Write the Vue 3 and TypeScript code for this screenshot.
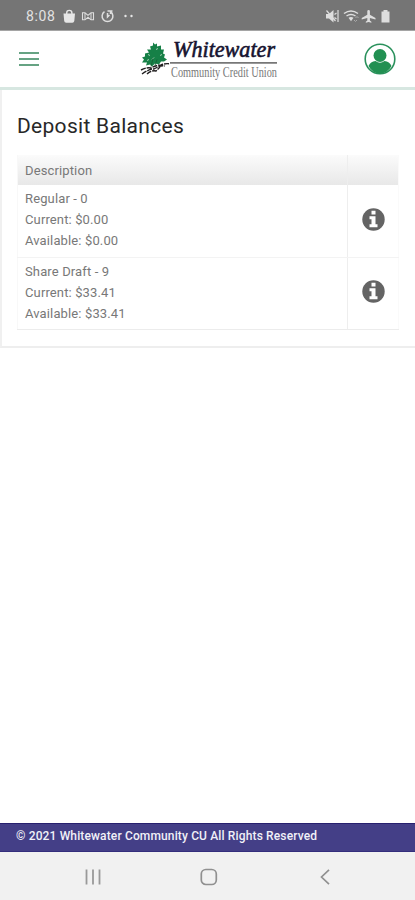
<script setup lang="ts">
interface Account {
  name: string
  current: string
  available: string
}

const accounts: Account[] = [
  { name: 'Regular - 0', current: '$0.00', available: '$0.00' },
  { name: 'Share Draft - 9', current: '$33.41', available: '$33.41' },
]
</script>

<template>
  <div class="screen">
    <div class="status">
      <span class="clock">8:08</span>
      <svg class="left-icons" width="76" height="16" viewBox="0 0 76 16" fill="none" stroke="#dedede">
        <path d="M1.500 5.500h11.500l-.7 7.500a2 2 0 0 1-2 1.700H4.200a2 2 0 0 1-2-1.700z" fill="#e6e6e6" stroke="none" />
        <path d="M4.700 6V5a2.600 2.600 0 0 1 5.200 0v1" stroke="#e6e6e6" stroke-width="1.400" />
        <path d="M20.500 4.800h2.500l3 2.500 3-2.500h2.500v7h-2.500l-3-2.500-3 2.500h-2.500z" stroke-width="1.100" />
        <path d="M23 5v6.500M29 5v6.500" stroke-width="1" />
        <path d="M42.500 3.700a5.400 5.400 0 1 0 6 0M45.500 5v4l2-2M45.500 3h5M48.500 3v3" stroke-width="1.500" />
        <circle cx="63.500" cy="8" r="1.200" fill="#e6e6e6" stroke="none" />
        <circle cx="69.500" cy="8" r="1.200" fill="#e6e6e6" stroke="none" />
      </svg>
      <svg class="right-icons" width="68" height="16" viewBox="0 0 68 16" fill="#dedede">
        <path d="M1 6h3l4.500-4v12.500L4 10.500H1z" />
        <path d="M1.500 2.500l9 10.500M9.500 6.500l2-1.500M9.500 9.500l2 1.500M13 2v12" fill="none" stroke="#dedede" stroke-width="1.200" />
        <path d="M19 5.500q7-5 14 0M21.500 8q4.500-3 9 0" fill="none" stroke="#dedede" stroke-width="1.500" />
        <path d="M23.500 9.700q2.500-1.400 5 0l-2.500 3.500z" />
        <path d="M29 12l1.500 1.500L32 12M30.500 10l1.500-1.500 1.500 1.500" fill="none" stroke="#aaa" />
        <path d="M43.600 2q1.300 0 1.300 1.300v3.500l5.600 3.300v1.500l-5.600-1.700v2.700l1.500 1.200v1l-2.800-.7-2.800.7v-1l1.500-1.200V9.900l-5.600 1.700v-1.500l5.600-3.300V3.300Q42.300 2 43.600 2z" />
        <path d="M56.500 3.500h2V2h4v1.500h2v11h-8z" />
      </svg>
    </div>

    <header class="header">
      <button class="menu" aria-label="Menu"><i></i><i></i><i></i></button>
      <svg class="logo" width="142" height="52" viewBox="0 -4.500 142 52">
        <path d="M13 5l2 2 2-1 0 3 4-1 0 4 3 0-1 4 2 1-1 3 3 2-3 2-3 0-2 3-4-1-3 3-2-2-4 1 1-3-5 0 2-3-2-2 3-1 0-3 4-1-2-3 4 0-1-3 3-1z" fill="#168047" />
        <path d="M8 17l2 1M16 12l2-1M20 18l2-1M12 22l2-2M7 23l2-1" stroke="#a8d0b5" stroke-width="1" />
        <path d="M11 29l2-8M15 28l2-6" stroke="#155c33" stroke-width=".8" />
        <path d="M1 32.500q6-3 10-2 5-3 10-3 5-2 9-1M2 36.500q7-5 12-5 6-4 11-3M7 36.500q4-4 9-3l4-4" fill="none" stroke="#211f20" stroke-width="1.400" stroke-dasharray="5 1" />
        <text class="brand" x="33" y="19.500" textLength="102" lengthAdjust="spacingAndGlyphs">Whitewater</text>
        <path d="M30 25.300h107" stroke="#777" stroke-width="1.800" />
        <text class="tagline" x="31" y="39.300" textLength="106" lengthAdjust="spacingAndGlyphs">Community Credit Union</text>
      </svg>
      <svg class="avatar" width="32" height="32" viewBox="0 0 32 32">
        <circle cx="16" cy="16" r="14.800" fill="#fff" stroke="#2a915c" stroke-width="1.600" />
        <circle cx="16" cy="12.500" r="6.500" fill="#229052" />
        <path d="M4.500 23q2-4.500 7-5 4.500 3.500 9 0 5 .5 7 5-4 7.500-11.500 7.500T4.500 23z" fill="#229052" />
      </svg>
    </header>

    <main class="card">
      <h1>Deposit Balances</h1>
      <div class="table">
        <div class="row head">
          <div class="cell">Description</div>
          <div class="action"></div>
        </div>
        <div v-for="a in accounts" :key="a.name" class="row">
          <div class="cell">
            <div>{{ a.name }}</div>
            <div>Current: {{ a.current }}</div>
            <div>Available: {{ a.available }}</div>
          </div>
          <div class="action">
            <svg width="23" height="23" viewBox="0 0 23 23">
              <circle cx="11.500" cy="11.500" r="11.200" fill="#646464" />
              <path d="M9.500 2.800h4v3.800h-4zM7.500 8.300h6v8h2v2.900h-8v-2.900h2v-5h-2z" fill="#fff" />
            </svg>
          </div>
        </div>
      </div>
    </main>

    <footer class="footer">© 2021 Whitewater Community CU All Rights Reserved</footer>
    <nav class="nav">
      <svg width="18" height="18" viewBox="0 0 18 18"><path d="M2.500 1.500v15M9 1.500v15M15.500 1.500v15" stroke="#999" stroke-width="1.800" /></svg>
      <svg width="18" height="18" viewBox="0 0 18 18"><rect x="1.300" y="1.500" width="15" height="15" rx="4.500" fill="none" stroke="#909090" stroke-width="1.700" /></svg>
      <svg width="18" height="18" viewBox="0 0 18 18"><path d="M13 1.800L5.500 9l7.500 7.200" fill="none" stroke="#909090" stroke-width="1.700" /></svg>
    </nav>
  </div>
</template>

<style>
body { background: #fff; }
</style>

<style scoped>
.screen {
  display: flex;
  flex-direction: column;
  height: 900px;
  font-family: Roboto, "Liberation Sans", sans-serif;
  background: #fff;
}
.status {
  display: flex;
  align-items: center;
  box-sizing: border-box;
  height: 31px;
  padding: 1px 22px 0 26px;
  background: #757575;
  border-bottom: 1px solid #a5a5a5;
}
.clock { width: 36px; color: #e2e2e2; font-size: 14px; letter-spacing: .6px; }
.left-icons { flex: none; }
.right-icons { flex: none; margin-left: auto; }
.header {
  display: flex;
  align-items: center;
  justify-content: space-between;
  box-sizing: border-box;
  height: 59px;
  padding: 0 19px;
  border-bottom: 3px solid #d7e7e1;
}
.menu {
  display: flex;
  flex-direction: column;
  gap: 4px;
  width: 20px;
  padding: 0;
  background: none;
  border: 0;
}
.menu i { height: 2px; background: #66a383; }
.logo { flex: none; margin-left: 101px; margin-right: auto; overflow: visible; }
.brand {
  font: italic 23px "Liberation Serif", serif;
  fill: #171430;
  stroke: #171430;
  stroke-width: .6px;
}
.tagline { font: 14.5px "Liberation Serif", serif; fill: #777; }
.avatar { flex: none; }
.card {
  box-sizing: border-box;
  height: 258px;
  padding: 20px 16px 0 15px;
  border-left: 2px solid #f0f0f0;
  border-bottom: 2px solid #eee;
}
h1 {
  margin: 0 0 13px;
  color: #282828;
  font-size: 21px;
  font-weight: 400;
  line-height: 32px;
  letter-spacing: .3px;
}
.table { border-bottom: 1px solid #ececec; }
.row { box-sizing: border-box; display: flex; height: 72px; }
.row + .row + .row { border-top: 1px solid #f3f3f3; }
.row.head { height: 30px; background: linear-gradient(#fbfbfb, #e8e8e8); }
.cell {
  flex: 1;
  box-sizing: border-box;
  padding: 3px 7px;
  border-left: 1px solid #f8f8f8;
  color: #787878;
  font-size: 13px;
  line-height: 21px;
  letter-spacing: .13px;
}
.head .cell { padding-top: 5px; }
.action {
  display: flex;
  align-items: center;
  justify-content: center;
  box-sizing: border-box;
  width: 52px;
  padding-bottom: 4px;
  border-left: 1px solid #eee;
  border-right: 1px solid #fafafa;
}
.footer {
  box-sizing: border-box;
  height: 29px;
  margin-top: auto;
  padding-left: 16px;
  background: #443f87;
  border-top: 1px solid #28206f;
  border-bottom: 1px solid #342e7c;
  color: #f1f1f8;
  font-size: 12px;
  font-weight: 500;
  line-height: 25px;
  letter-spacing: .14px;
  white-space: nowrap;
}
.nav {
  display: flex;
  align-items: center;
  justify-content: space-between;
  box-sizing: border-box;
  height: 48px;
  padding: 2px 81px 0 84px;
  background: #f1f1f1;
}
</style>
